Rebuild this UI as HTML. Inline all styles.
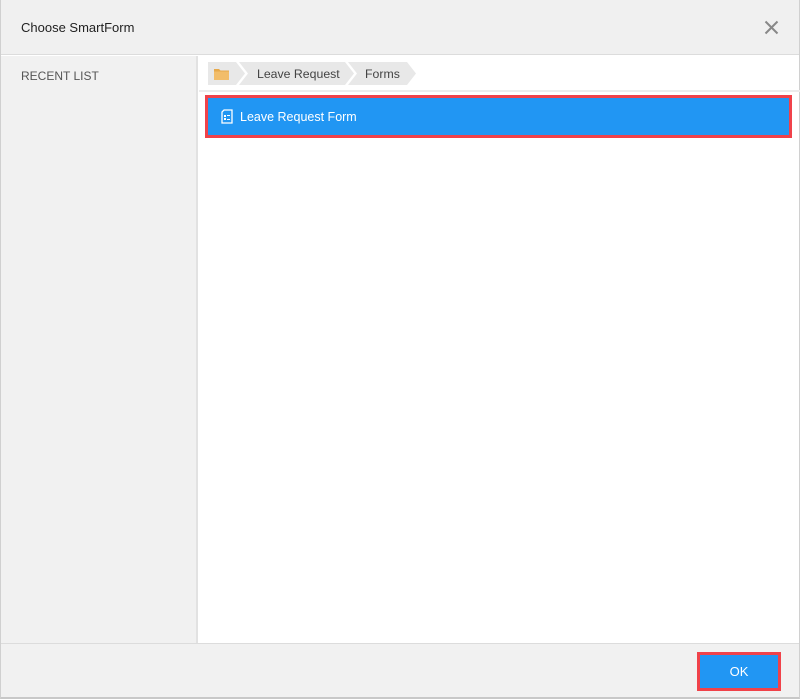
<!DOCTYPE html>
<html><head><meta charset="utf-8"><style>
*{margin:0;padding:0;box-sizing:border-box}
body{width:800px;height:699px;background:#fff;font-family:"Liberation Sans",sans-serif;position:relative;overflow:hidden}
.abs{position:absolute}
</style></head><body>
<div class="abs" style="left:0;top:0;width:800px;height:699px;border:1px solid #d0d0d0;border-top:none;border-bottom:2px solid #c8c8c8"></div>
<div class="abs" style="left:1px;top:0;width:798px;height:55px;background:#f0f0f0;border-bottom:1px solid #dcdcdc"></div>
<div class="abs" style="left:21px;top:20px;font-size:13px;color:#222">Choose SmartForm</div>
<svg class="abs" style="left:764px;top:20px" width="15" height="15" viewBox="0 0 15 15"><path d="M1.5 1.5L13.5 13.5M13.5 1.5L1.5 13.5" stroke="#888" stroke-width="2"/></svg>
<div class="abs" style="left:1px;top:56px;width:197px;height:587px;background:#f1f1f1;border-right:2px solid #e2e2e2"></div>
<div class="abs" style="left:21px;top:69px;font-size:12px;color:#555">RECENT LIST</div>
<svg class="abs" style="left:0;top:0" width="800" height="100">
<polygon points="208,62 236,62 245,73.5 236,85 208,85" fill="#e8e8e8"/>
<polygon points="239,62 345,62 354,73.5 345,85 239,85 248,73.5" fill="#e8e8e8"/>
<polygon points="348,62 407,62 416,73.5 407,85 348,85 357,73.5" fill="#e8e8e8"/>
<path d="M214 69 h5 l1.5 1.5 h8.5 v9.5 h-15z" fill="#e7a94b"/>
<path d="M214 71.5 h15 v8.5 h-15z" fill="#f2bd6a"/>
<line x1="199" y1="91" x2="800" y2="91" stroke="#ececec" stroke-width="2"/>
</svg>
<div class="abs" style="left:257px;top:67px;font-size:12.3px;color:#444">Leave Request</div>
<div class="abs" style="left:365px;top:67px;font-size:12.3px;color:#444">Forms</div>
<div class="abs" style="left:205px;top:95px;width:587px;height:43px;background:#2196f3;border:3px solid #f0424a"></div>
<svg class="abs" style="left:221px;top:109px" width="12" height="15" viewBox="0 0 12 15"><path d="M3 1h8v13H1V3z" fill="none" stroke="#fff" stroke-width="1.3"/><rect x="3" y="6" width="2" height="2" fill="#fff"/><rect x="6" y="6" width="3" height="1" fill="#fff"/><rect x="3" y="9" width="2" height="2" fill="#fff"/><rect x="6" y="10" width="3" height="1" fill="#fff"/></svg>
<div class="abs" style="left:240px;top:110px;font-size:12.5px;color:#fff">Leave Request Form</div>
<div class="abs" style="left:1px;top:643px;width:798px;height:54px;background:#f1f1f1;border-top:1px solid #dcdcdc"></div>
<div class="abs" style="left:697px;top:652px;width:84px;height:39px;background:#2196f3;border:3px solid #f0424a;color:#fff;font-size:13px;text-align:center;line-height:34px">OK</div>
</body></html>
